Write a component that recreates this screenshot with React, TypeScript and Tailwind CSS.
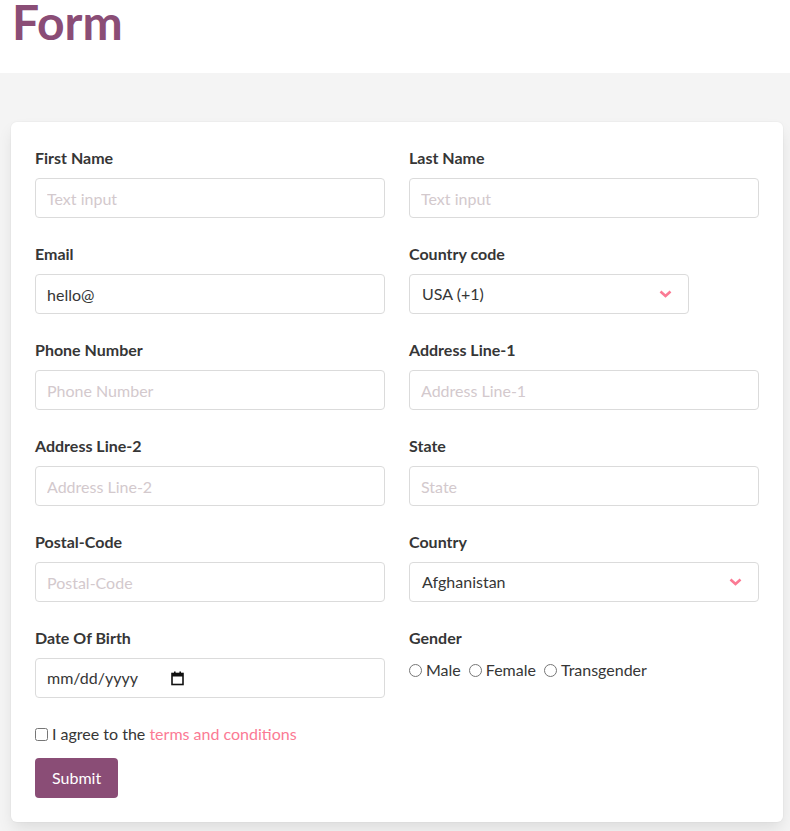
import React from "react";

const font = { fontFamily: "Lato, 'Open Sans', sans-serif" };

function Field({ label, children }: { label: string; children: React.ReactNode }) {
  return (
    <div className="flex flex-col">
      <label className="mb-2 text-base font-bold leading-6 text-[#363636]">{label}</label>
      {children}
    </div>
  );
}

function TextInput({ placeholder, value }: { placeholder?: string; value?: string }) {
  return (
    <input
      type="text"
      placeholder={placeholder}
      defaultValue={value}
      className="h-10 w-full rounded border border-[#dbdbdb] bg-white px-[11px] text-base text-[#363636] outline-none placeholder:text-[#d3c9cd]"
    />
  );
}

function Chevron() {
  return (
    <svg width="13" height="8" viewBox="0 0 13 8" className="shrink-0">
      <polyline points="1.5,1.5 6.5,6 11.5,1.5" fill="none" stroke="#fb7a94" strokeWidth="2.6" />
    </svg>
  );
}

function SelectBox({ value, width }: { value: string; width: string }) {
  return (
    <div className={`flex h-10 items-center justify-between rounded border border-[#dbdbdb] bg-white pl-3 pr-4 ${width}`}>
      <span className="text-base text-[#363636]">{value}</span>
      <Chevron />
    </div>
  );
}

export default function App() {
  return (
    <div style={font} className="min-h-[831px] bg-[#f4f4f4]">
      <div className="h-[73px] bg-white px-3">
        <h1 className="text-[48px] font-bold leading-[43px] text-[#8a4d76]">Form</h1>
      </div>
      <div className="pb-[9px] pl-[11px] pr-[7px] pt-[49px]">
        <div className="rounded-md bg-white p-6 shadow-[0_8px_16px_-2px_rgba(10,10,10,0.1),0_0_0_1px_rgba(10,10,10,0.02)]">
          <div className="grid grid-cols-2 gap-x-6 gap-y-6">
            <Field label="First Name">
              <TextInput placeholder="Text input" />
            </Field>
            <Field label="Last Name">
              <TextInput placeholder="Text input" />
            </Field>
            <Field label="Email">
              <TextInput value="hello@" />
            </Field>
            <Field label="Country code">
              <SelectBox value="USA (+1)" width="w-[280px]" />
            </Field>
            <Field label="Phone Number">
              <TextInput placeholder="Phone Number" />
            </Field>
            <Field label="Address Line-1">
              <TextInput placeholder="Address Line-1" />
            </Field>
            <Field label="Address Line-2">
              <TextInput placeholder="Address Line-2" />
            </Field>
            <Field label="State">
              <TextInput placeholder="State" />
            </Field>
            <Field label="Postal-Code">
              <TextInput placeholder="Postal-Code" />
            </Field>
            <Field label="Country">
              <SelectBox value="Afghanistan" width="w-full" />
            </Field>
            <Field label="Date Of Birth">
              <div className="flex h-10 w-full items-center rounded border border-[#dbdbdb] bg-white px-[11px]">
                <span className="w-[124px] text-base text-[#363636]">mm/dd/yyyy</span>
                <svg width="13" height="15" viewBox="0 0 13 15">
                  <rect x="1" y="2.5" width="11" height="11" fill="none" stroke="#111" strokeWidth="1.6" />
                  <rect x="1" y="2.5" width="11" height="3" fill="#111" />
                  <rect x="3" y="0.5" width="1.6" height="3" fill="#111" />
                  <rect x="8.4" y="0.5" width="1.6" height="3" fill="#111" />
                </svg>
              </div>
            </Field>
            <Field label="Gender">
              <div className="flex h-6 items-center text-base text-[#363636]">
                {["Male", "Female", "Transgender"].map((g) => (
                  <label key={g} className="mr-2 flex items-center">
                    <input type="radio" name="gender" className="m-0 mr-1 h-[13px] w-[13px]" />
                    {g}
                  </label>
                ))}
              </div>
            </Field>
          </div>
          <label className="mt-6 flex h-6 items-center text-base text-[#363636]">
            <input type="checkbox" className="m-0 mr-1 h-[13px] w-[13px]" />
            I agree to the&nbsp;<a className="text-[#fb7a94]">terms and conditions</a>
          </label>
          <button className="mt-3 h-10 rounded bg-[#8a4d76] px-[17px] text-base text-white">Submit</button>
        </div>
      </div>
    </div>
  );
}
